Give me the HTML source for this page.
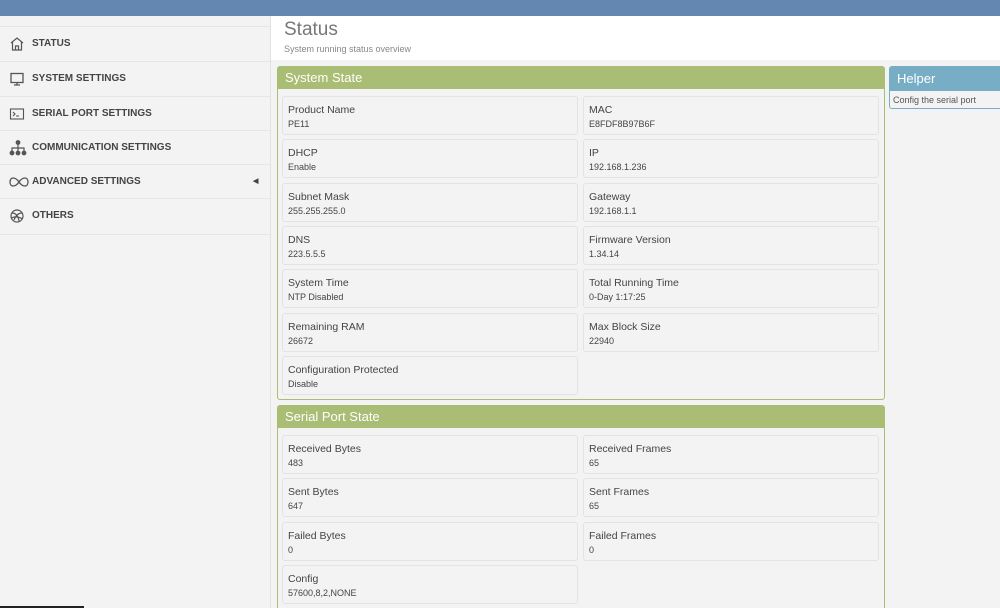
<!DOCTYPE html>
<html style="width:1000px;height:608px;overflow:hidden"><head><meta charset="utf-8"><style>
*{box-sizing:border-box;margin:0;padding:0}
body{width:1000px;height:608px;overflow:hidden;background:#f3f3f3;font-family:"Liberation Sans",sans-serif;position:relative}
.top{position:absolute;left:0;top:0;width:1000px;height:16px;background:#6487b1}
.side{position:absolute;left:0;top:16px;width:271px;height:592px;background:#f3f3f3;border-right:1px solid #e2e2e2}
.item{position:absolute;left:0;width:270px;height:35px;border-top:1px solid #e6e6e6;font-size:10px;font-weight:bold;color:#444;line-height:34px;padding-left:32px}
.item svg{position:absolute;left:9px;top:9px}
.hdr{position:absolute;left:271px;top:16px;width:729px;height:44px;background:#fff}
.hdr h1{position:absolute;left:13px;top:3px;font-weight:normal;font-size:19px;color:#777}
.hdr p{position:absolute;left:13px;top:28px;font-size:9px;color:#888}
.panel{position:absolute;border:1px solid #a9bd74;border-radius:3px;background:#f3f3f3}
.ph{height:22px;background:#a9bd74;color:#fff;font-size:13px;line-height:22px;padding-left:7px}
.cell{position:absolute;width:296px;height:39px;border:1px solid #e3e3e3;border-radius:3px;background:#f3f3f3;padding:6px 0 0 5px}
.cell b{display:block;font-weight:normal;font-size:10.5px;color:#444;line-height:14px}
.cell i{display:block;font-style:normal;font-size:9px;color:#444;margin-top:2px}
</style></head><body>
<div class="top"></div>
<div class="side">
<div class="item" style="top:10px;height:35px;line-height:34px"><svg width="16" height="16" viewBox="0 0 16 16" fill="none" stroke="#555" stroke-width="1.2"><path d="M2 7L8 2l6 5M3.5 6v8h9V6M6.5 14v-4h3v4"/></svg>STATUS</div>
<div class="item" style="top:45px"><svg width="16" height="16" viewBox="0 0 16 16" fill="none" stroke="#555" stroke-width="1.3"><rect x="2" y="2.5" width="12" height="9"/><path d="M8 11.5v2M5 14h6"/></svg>SYSTEM SETTINGS</div>
<div class="item" style="top:80px"><svg width="16" height="16" viewBox="0 0 16 16" fill="none" stroke="#555" stroke-width="1.1"><rect x="1.5" y="3" width="13" height="10"/><path d="M4 6l2 2-2 2M7 10h3"/></svg>SERIAL PORT SETTINGS</div>
<div class="item" style="top:114px"><svg width="18" height="16" viewBox="0 0 18 16" fill="#555" stroke="#555" stroke-width="1.2"><circle cx="9" cy="2.5" r="1.8"/><path d="M9 4v4M3 12V8h12v4" fill="none"/><circle cx="3" cy="13" r="1.8"/><circle cx="9" cy="13" r="1.8"/><circle cx="15" cy="13" r="1.8"/><path d="M9 8v4" fill="none"/></svg>COMMUNICATION SETTINGS</div>
<div class="item" style="top:148px"><svg width="20" height="16" viewBox="0 0 20 16" fill="none" stroke="#555" stroke-width="1.3"><path d="M10 8c-2-3-4-4-6-4s-3 2-3 4 1 4 3 4 4-1 6-4c2-3 4-4 6-4s3 2 3 4-1 4-3 4-4-1-6-4z"/></svg>ADVANCED SETTINGS<span style="position:absolute;left:253px;font-size:7px;color:#444">◀</span></div>
<div class="item" style="top:182px;height:37px;border-bottom:1px solid #e6e6e6"><svg width="16" height="16" viewBox="0 0 16 16" fill="none" stroke="#555" stroke-width="1.2"><circle cx="8" cy="8" r="6"/><path d="M3 5c3 0 6 2 7 8M13 5c-3 0-6 2-8 7M2.5 10c4-2 8-1 11 1"/></svg>OTHERS</div>
<div style="position:absolute;left:0;top:590px;width:84px;height:2px;background:#222"></div>
</div>
<div class="hdr"><h1>Status</h1><p>System running status overview</p></div>
<div class="panel" style="left:277px;top:66px;width:608px;height:334px"><div class="ph">System State</div>
<div class="cell" style="left:4px;top:29px"><b>Product Name</b><i>PE11</i></div>
<div class="cell" style="left:305px;top:29px"><b>MAC</b><i>E8FDF8B97B6F</i></div>
<div class="cell" style="left:4px;top:72px"><b>DHCP</b><i>Enable</i></div>
<div class="cell" style="left:305px;top:72px"><b>IP</b><i>192.168.1.236</i></div>
<div class="cell" style="left:4px;top:116px"><b>Subnet Mask</b><i>255.255.255.0</i></div>
<div class="cell" style="left:305px;top:116px"><b>Gateway</b><i>192.168.1.1</i></div>
<div class="cell" style="left:4px;top:159px"><b>DNS</b><i>223.5.5.5</i></div>
<div class="cell" style="left:305px;top:159px"><b>Firmware Version</b><i>1.34.14</i></div>
<div class="cell" style="left:4px;top:202px"><b>System Time</b><i>NTP Disabled</i></div>
<div class="cell" style="left:305px;top:202px"><b>Total Running Time</b><i>0-Day 1:17:25</i></div>
<div class="cell" style="left:4px;top:246px"><b>Remaining RAM</b><i>26672</i></div>
<div class="cell" style="left:305px;top:246px"><b>Max Block Size</b><i>22940</i></div>
<div class="cell" style="left:4px;top:289px"><b>Configuration Protected</b><i>Disable</i></div>
</div>
<div class="panel" style="left:277px;top:405px;width:608px;height:203px;border-bottom:none;border-radius:3px 3px 0 0"><div class="ph">Serial Port State</div>
<div class="cell" style="left:4px;top:29px"><b>Received Bytes</b><i>483</i></div>
<div class="cell" style="left:305px;top:29px"><b>Received Frames</b><i>65</i></div>
<div class="cell" style="left:4px;top:72px"><b>Sent Bytes</b><i>647</i></div>
<div class="cell" style="left:305px;top:72px"><b>Sent Frames</b><i>65</i></div>
<div class="cell" style="left:4px;top:116px"><b>Failed Bytes</b><i>0</i></div>
<div class="cell" style="left:305px;top:116px"><b>Failed Frames</b><i>0</i></div>
<div class="cell" style="left:4px;top:159px"><b>Config</b><i>57600,8,2,NONE</i></div>
</div>
<div class="panel" style="left:889px;top:66px;width:120px;height:43px;border-color:#78aec5"><div class="ph" style="background:#78aec5;height:24px;line-height:24px">Helper</div>
<div style="font-size:9px;color:#555;padding:4px 3px">Config the serial port</div></div>
</body></html>
